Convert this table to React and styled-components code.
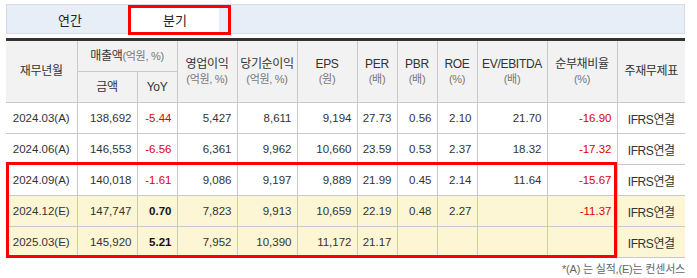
import React from 'react';
import styled, { createGlobalStyle } from 'styled-components';

const GlobalStyle = createGlobalStyle`
  body {
    margin: 0;
    background: #fff;
    font-family: "Liberation Sans", "Noto Sans CJK KR", sans-serif;
    color: #333;
  }
`;

const cols = [71, 60, 40, 60, 60, 60, 40, 40, 40, 70, 70, 68];

const rows = [
  { date: '2024.03(A)', sales: '138,692', yoy: '-5.44', op: '5,427', net: '8,611', eps: '9,194', per: '27.73', pbr: '0.56', roe: '2.10', ev: '21.70', debt: '-16.90' },
  { date: '2024.06(A)', sales: '146,553', yoy: '-6.56', op: '6,361', net: '9,962', eps: '10,660', per: '23.59', pbr: '0.53', roe: '2.37', ev: '18.32', debt: '-17.32' },
  { date: '2024.09(A)', sales: '140,018', yoy: '-1.61', op: '9,086', net: '9,197', eps: '9,889', per: '21.99', pbr: '0.45', roe: '2.14', ev: '11.64', debt: '-15.67' },
  { date: '2024.12(E)', sales: '147,747', yoy: '0.70', op: '7,823', net: '9,913', eps: '10,659', per: '22.19', pbr: '0.48', roe: '2.27', ev: '', debt: '-11.37', est: true },
  { date: '2025.03(E)', sales: '145,920', yoy: '5.21', op: '7,952', net: '10,390', eps: '11,172', per: '21.17', pbr: '', roe: '', ev: '', debt: '', est: true },
];

function App() {
  return (
    <Page>
      <GlobalStyle />
      <TabBar>
        <Tab>연간</Tab>
        <Tab active>분기</Tab>
        <TabMark />
      </TabBar>

      <TableWrap>
        <Table>
          <colgroup>
            {cols.map((w, i) => <col key={i} style={{ width: w }} />)}
          </colgroup>
          <thead>
            <tr className="top">
              <Th rowSpan={2}>재무년월</Th>
              <Th colSpan={2}>매출액<Unit inline>(억원, %)</Unit></Th>
              <Th rowSpan={2}>영업이익<Unit>(억원, %)</Unit></Th>
              <Th rowSpan={2}>당기순이익<Unit>(억원, %)</Unit></Th>
              <Th rowSpan={2}>EPS<Unit>(원)</Unit></Th>
              <Th rowSpan={2}>PER<Unit>(배)</Unit></Th>
              <Th rowSpan={2}>PBR<Unit>(배)</Unit></Th>
              <Th rowSpan={2}>ROE<Unit>(%)</Unit></Th>
              <Th rowSpan={2}>EV/EBITDA<Unit>(배)</Unit></Th>
              <Th rowSpan={2}>순부채비율<Unit>(%)</Unit></Th>
              <Th rowSpan={2}>주재무제표</Th>
            </tr>
            <tr className="sub">
              <Th>금액</Th>
              <Th>YoY</Th>
            </tr>
          </thead>
          <tbody>
            {rows.map((r) => (
              <Row key={r.date} est={r.est}>
                <Td align="center">{r.date}</Td>
                <Td>{r.sales}</Td>
                <Td neg={r.yoy.startsWith('-')} bold={r.est}>{r.yoy}</Td>
                <Td>{r.op}</Td>
                <Td>{r.net}</Td>
                <Td>{r.eps}</Td>
                <Td>{r.per}</Td>
                <Td>{r.pbr}</Td>
                <Td>{r.roe}</Td>
                <Td>{r.ev}</Td>
                <Td neg={r.debt.startsWith('-')}>{r.debt}</Td>
                <Td align="center" kr>IFRS연결</Td>
              </Row>
            ))}
          </tbody>
        </Table>
        <HighlightBox />
      </TableWrap>

      <Note>*(A) 는 실적,(E)는 컨센서스</Note>
    </Page>
  );
}

const Page = styled.div`
  width: 679px;
  padding: 4px 0 0 6px;
`;

const TabBar = styled.div`
  position: relative;
  display: flex;
  gap: 17px;
  height: 28px;
  padding-left: 19px;
  background: #e8eef8;
  border: 1px solid #d4dbe7;
`;

const Tab = styled.div`
  width: 88px;
  display: flex;
  align-items: center;
  justify-content: center;
  font-size: 13px;
  color: #222;
  background: ${(p) => (p.active ? '#fff' : 'transparent')};
`;

const TabMark = styled.div`
  position: absolute;
  left: 121px;
  top: 0;
  width: 97px;
  height: 24px;
  border: 3px solid #f00;
`;

const TableWrap = styled.div`
  position: relative;
  margin-top: 4px;
`;

const Table = styled.table`
  width: 679px;
  table-layout: fixed;
  border-collapse: collapse;
  border-top: 3px solid #333;

  tr.top th { height: 30px; }
  tr.sub th { height: 30px; }
`;

const Th = styled.th`
  background: #f2f2f2;
  font-weight: normal;
  font-size: 12px;
  line-height: 15px;
  color: #333;
  padding: 0;
  border: 1px solid #c9c9c9;
  border-top: none;
  white-space: nowrap;
  letter-spacing: -0.3px;

  &:first-child { border-left: none; }
  &:last-child { border-right: none; }
`;

const Unit = styled.span`
  display: ${(p) => (p.inline ? 'inline' : 'block')};
  font-size: 11px;
  color: #777;
`;

const Row = styled.tr`
  height: 31px;
  background: ${(p) => (p.est ? '#fcf6d4' : '#fff')};
`;

const Td = styled.td`
  padding: 0 5px 0 0;
  text-align: ${(p) => p.align || 'right'};
  font-size: 11.5px;
  font-weight: ${(p) => (p.bold ? 'bold' : 'normal')};
  color: ${(p) => (p.neg ? '#e00000' : p.bold ? '#111' : '#333')};
  border: 1px solid #c9c9c9;
  white-space: nowrap;
  letter-spacing: ${(p) => (p.kr ? '-0.4px' : '0')};
  ${(p) => p.align === 'center' && 'padding: 0;'}
  font-size: ${(p) => (p.kr ? '12px' : '11.5px')};

  &:first-child { border-left: none; }
  &:last-child { border-right: none; }
`;

const HighlightBox = styled.div`
  position: absolute;
  left: 0;
  top: 124px;
  width: 605px;
  height: 90px;
  border: 3px solid #f00;
  pointer-events: none;
`;

const Note = styled.div`
  margin-top: 2px;
  text-align: right;
  font-size: 11px;
  color: #666;
  letter-spacing: -0.2px;
`;

export default App;
